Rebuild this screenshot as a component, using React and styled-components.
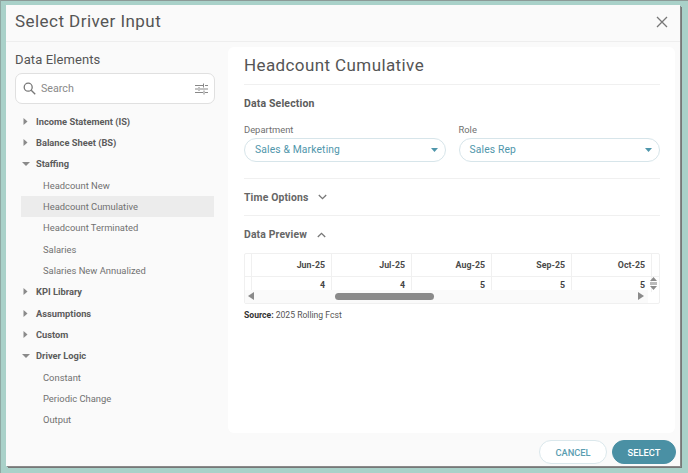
import React from 'react';
import styled, { createGlobalStyle } from 'styled-components';

const GlobalStyle = createGlobalStyle`
  html, body {
    margin: 0;
    padding: 0;
    width: 688px;
    height: 473px;
    overflow: hidden;
    background: #a9d1c9;
    font-family: Roboto, "Liberation Sans", sans-serif;
  }
`;

const Backdrop = styled.div`
  position: relative;
  width: 688px;
  height: 473px;
  box-sizing: border-box;
  padding: 4px 0 0 5px;
  border-top: 1px solid #8c9a97;
  border-left: 1px solid #8fa8a3;
`;

const Dialog = styled.div`
  position: relative;
  width: 674px;
  height: 461px;
  background: #fafafa;
  box-shadow: 1px 1px 0 #8a8a8a, 2px 2px 0 #777;
`;

const Header = styled.div`
  height: 37px;
  box-sizing: border-box;
  padding: 5px 9px 0;
  border-bottom: 1px solid #eeeeee;
`;

const Title = styled.h1`
  margin: 0;
  font-size: 17px;
  line-height: 22px;
  font-weight: 400;
  letter-spacing: 0.45px;
  color: #555;
`;

const CloseButton = styled.button`
  position: absolute;
  top: 11px;
  right: 12px;
  width: 12px;
  height: 12px;
  padding: 0;
  border: 0;
  background: none;
  display: block;
`;

const Sidebar = styled.div`
  position: absolute;
  left: 9px;
  top: 46px;
  width: 200px;
`;

const SideTitle = styled.h2`
  margin: 0 0 4px;
  font-size: 13px;
  line-height: 18px;
  font-weight: 400;
  letter-spacing: 0.1px;
  color: #555;
`;

const SearchBox = styled.div`
  height: 29px;
  border: 1px solid #e0e0e0;
  border-radius: 7px;
  background: #fff;
  display: flex;
  align-items: center;
  padding: 0 6px 0 7px;
  margin-bottom: 6.5px;
`;

const SearchText = styled.span`
  flex: 1;
  margin-left: 5px;
  font-size: 10.7px;
  color: #8a8a8a;
`;

const Tree = styled.div`
  margin-left: 6px;
  width: 193px;
`;

const GroupRow = styled.div`
  height: 21.35px;
  display: flex;
  align-items: center;
  font-size: 9.3px;
  font-weight: 700;
  color: #5c5c5c;
`;

const Caret = styled.span`
  width: 9px;
  display: flex;
  justify-content: center;
  margin-right: 6px;
`;

const LeafRow = styled.div`
  height: 21.35px;
  line-height: 21.35px;
  padding-left: 22px;
  font-size: 9.4px;
  color: #717171;
  background: ${({ $active }) => ($active ? '#ececec' : 'transparent')};
`;

const Content = styled.div`
  position: absolute;
  left: 222px;
  top: 42px;
  width: 447px;
  height: 386px;
  box-sizing: border-box;
  background: #fff;
  border-radius: 6px;
  padding: 0 15px 0 16px;
`;

const ContentTitle = styled.h2`
  margin: 0;
  height: 38px;
  padding-top: 8px;
  box-sizing: border-box;
  border-bottom: 1px solid #f0f0f0;
  font-size: 17px;
  line-height: 20px;
  font-weight: 400;
  letter-spacing: 0.4px;
  color: #555;
`;

const SectionLabel = styled.div`
  font-size: 10.5px;
  font-weight: 700;
  letter-spacing: 0.15px;
  color: #5c5c5c;
  line-height: 14px;
  margin-top: 12px;
`;

const SelectRow = styled.div`
  display: flex;
  gap: 13px;
  margin-top: 12px;
  padding-bottom: 16px;
  border-bottom: 1px solid #f0f0f0;
`;

const Field = styled.div`
  width: 202px;
`;

const FieldLabel = styled.div`
  font-size: 9.4px;
  line-height: 13px;
  color: #6f6f6f;
  margin-bottom: 2px;
`;

const SelectBox = styled.div`
  height: 22px;
  border: 1px solid #d7e5ea;
  border-radius: 12px;
  display: flex;
  align-items: center;
  justify-content: space-between;
  padding: 0 7px 1px 10px;
  box-sizing: content-box;
  font-size: 10.3px;
  letter-spacing: 0.15px;
  color: #4f96ab;
  height: 21px;
`;

const Toggle = styled.div`
  display: flex;
  align-items: center;
  gap: 10px;
  height: 37px;
  box-sizing: border-box;
  font-size: 10.4px;
  font-weight: 700;
  letter-spacing: 0.15px;
  color: #666;
  border-bottom: ${({ $divider }) => ($divider ? '1px solid #f0f0f0' : 'none')};
`;

const PreviewGrid = styled.div`
  position: relative;
  height: 49px;
  border: 1px solid #f0f0f0;
  border-radius: 2px;
  overflow: hidden;
`;

const HeadRow = styled.div`
  display: flex;
  height: 22px;
  border-bottom: 1px solid #f0f0f0;
`;

const DataRow = styled.div`
  display: flex;
  height: 15px;
`;

const Cell = styled.div`
  width: 80px;
  flex: none;
  box-sizing: border-box;
  padding-right: 6px;
  text-align: right;
  border-right: 1px solid #f0f0f0;
  font-size: 8.8px;
  font-weight: 700;
  line-height: ${({ $head }) => ($head ? '22px' : '17px')};
  color: ${({ $head }) => ($head ? '#4a4a4a' : '#444')};
`;

// first column is scrolled out of view, only its last pixel shows
const Stub = styled(Cell)`
  width: 7px;
  display: flex;
  justify-content: flex-end;
  overflow: hidden;
  white-space: nowrap;
  color: #999;
`;

const HScroll = styled.div`
  position: absolute;
  left: 0;
  right: 11px;
  top: 36px;
  height: 13px;
  background: #fafafa;
`;

const Thumb = styled.div`
  position: absolute;
  left: 90px;
  top: 3px;
  width: 99px;
  height: 7px;
  border-radius: 4px;
  background: #8a8a8a;
`;

const ArrowLeft = styled.span`
  position: absolute;
  left: 3px;
  top: 2px;
  border: 4px solid transparent;
  border-left: 0;
  border-right: 6px solid #8a8a8a;
`;

const ArrowRight = styled.span`
  position: absolute;
  right: 4px;
  top: 2px;
  border: 4px solid transparent;
  border-right: 0;
  border-left: 6px solid #8a8a8a;
`;

const VScroll = styled.svg`
  position: absolute;
  right: 2px;
  top: 23px;
`;

const Source = styled.div`
  margin-top: 5px;
  font-size: 8.6px;
  line-height: 13px;
  color: #555;
  b {
    color: #333;
    font-weight: 700;
  }
`;

const Footer = styled.div`
  position: absolute;
  right: 4px;
  bottom: 2px;
  display: flex;
  gap: 5px;
`;

const Button = styled.button`
  height: 24px;
  width: ${({ $primary }) => ($primary ? '64px' : '68px')};
  border-radius: 12px;
  border: 1px solid ${({ $primary }) => ($primary ? '#4a90a4' : '#dbe8ec')};
  background: ${({ $primary }) => ($primary ? '#4a90a4' : '#fff')};
  color: ${({ $primary }) => ($primary ? '#fff' : '#5a9db1')};
  font-family: inherit;
  font-size: 9.3px;
  font-weight: 500;
  padding: 0;
`;

const TriRight = () => (
  <svg width="5" height="7" viewBox="0 0 5 7"><path d="M0.5 0l4 3.5-4 3.5z" fill="#8a8a8a" /></svg>
);

const TriDown = () => (
  <svg width="8" height="4" viewBox="0 0 8 4"><path d="M0 0h8L4 4z" fill="#8a8a8a" /></svg>
);

const SelectCaret = () => (
  <svg width="7" height="4" viewBox="0 0 7 4"><path d="M0 0h7L3.5 4z" fill="#4f96ab" /></svg>
);

const Chevron = ({ up }) => (
  <svg width="9" height="6" viewBox="0 0 9 6" fill="none" stroke="#777" strokeWidth="1.3">
    <path d={up ? 'M.8 5l3.7-3.7L8.2 5' : 'M.8 1l3.7 3.7L8.2 1'} />
  </svg>
);

const groups = [
  { name: 'Income Statement (IS)' },
  { name: 'Balance Sheet (BS)' },
  { name: 'Staffing', items: ['Headcount New', 'Headcount Cumulative', 'Headcount Terminated', 'Salaries', 'Salaries New Annualized'] },
  { name: 'KPI Library' },
  { name: 'Assumptions' },
  { name: 'Custom' },
  { name: 'Driver Logic', items: ['Constant', 'Periodic Change', 'Output'] },
];

const months = [
  ['Jun-25', 4],
  ['Jul-25', 4],
  ['Aug-25', 5],
  ['Sep-25', 5],
  ['Oct-25', 5],
];

const App = () => {
  return (
    <Backdrop>
      <GlobalStyle />
      <Dialog>
        <Header>
          <Title>Select Driver Input</Title>
          <CloseButton aria-label="Close">
            <svg width="12" height="12" viewBox="0 0 12 12" fill="none" stroke="#777" strokeWidth="1.3">
              <path d="M1 1l10 10M11 1L1 11" />
            </svg>
          </CloseButton>
        </Header>

        <Sidebar>
          <SideTitle>Data Elements</SideTitle>
          <SearchBox>
            <svg width="13" height="13" viewBox="0 0 13 13" fill="none" stroke="#777" strokeWidth="1.3">
              <circle cx="5.2" cy="5.2" r="4" />
              <path d="M8.2 8.2l4 4" />
            </svg>
            <SearchText>Search</SearchText>
            <svg width="13" height="12" viewBox="0 0 13 12" fill="none" stroke="#888" strokeWidth="1">
              <path d="M0 2.5h8M10 2.5h3M8.5 .5v4M0 6h3M5 6h8M4 4v4M0 9.5h8M10 9.5h3M9 7.5v4" />
            </svg>
          </SearchBox>
          <Tree>
            {groups.map((group) => (
              <React.Fragment key={group.name}>
                <GroupRow>
                  <Caret>{group.items ? <TriDown /> : <TriRight />}</Caret>
                  {group.name}
                </GroupRow>
                {group.items?.map((item) => (
                  <LeafRow key={item} $active={item === 'Headcount Cumulative'}>{item}</LeafRow>
                ))}
              </React.Fragment>
            ))}
          </Tree>
        </Sidebar>

        <Content>
          <ContentTitle>Headcount Cumulative</ContentTitle>
          <SectionLabel>Data Selection</SectionLabel>
          <SelectRow>
            <Field>
              <FieldLabel>Department</FieldLabel>
              <SelectBox>Sales &amp; Marketing<SelectCaret /></SelectBox>
            </Field>
            <Field>
              <FieldLabel>Role</FieldLabel>
              <SelectBox>Sales Rep<SelectCaret /></SelectBox>
            </Field>
          </SelectRow>
          <Toggle $divider>Time Options <Chevron /></Toggle>
          <Toggle>Data Preview <Chevron up /></Toggle>
          <PreviewGrid>
            <HeadRow>
              <Stub $head>May-25</Stub>
              {months.map(([m]) => <Cell key={m} $head>{m}</Cell>)}
            </HeadRow>
            <DataRow>
              <Stub>4</Stub>
              {months.map(([m, v]) => <Cell key={m}>{v}</Cell>)}
            </DataRow>
            <HScroll>
              <ArrowLeft />
              <Thumb />
              <ArrowRight />
            </HScroll>
            <VScroll width="7" height="13" viewBox="0 0 7 13">
              <path d="M3.5 0L7 4H0zM3.5 13L0 9h7z" fill="#8a8a8a" />
              <rect x="0" y="5" width="7" height="3" fill="#bbb" />
            </VScroll>
          </PreviewGrid>
          <Source><b>Source:</b> 2025 Rolling Fcst</Source>
        </Content>

        <Footer>
          <Button>CANCEL</Button>
          <Button $primary>SELECT</Button>
        </Footer>
      </Dialog>
    </Backdrop>
  );
};

export default App;
